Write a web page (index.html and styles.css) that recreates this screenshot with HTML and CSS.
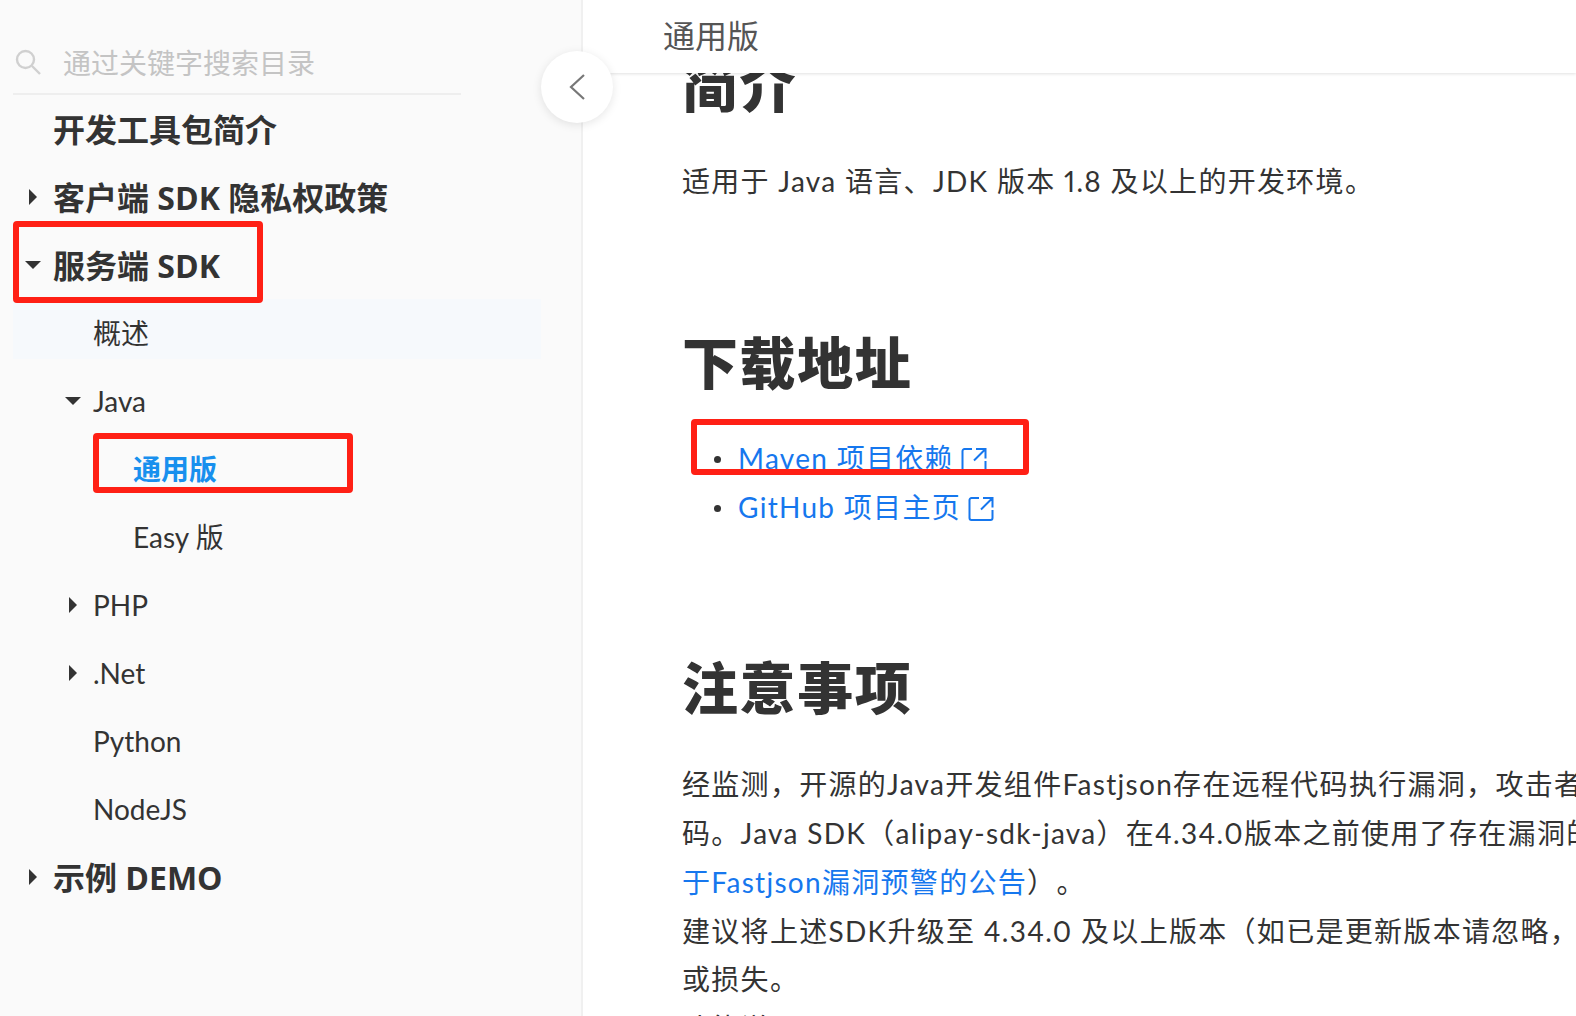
FILE: index.html
```html
<!DOCTYPE html>
<html lang="zh-CN">
<head>
  <meta charset="UTF-8" />
  <title>通用版</title>
  <link rel="stylesheet" href="styles.css">
</head>
<body>

  <aside class="sidebar">
    <div class="search">
      <svg class="search-icon" width="28" height="28" viewBox="0 0 28 28"><circle cx="11.5" cy="11.5" r="8.5" fill="none" stroke="#d0d0d0" stroke-width="2.4"/><path d="M18 18l8 8" stroke="#d0d0d0" stroke-width="2.4" fill="none"/></svg>
      <span class="search-text">通过关键字搜索目录</span>
    </div>
    <ul class="tree">
      <li class="item top">开发工具包简介</li>
      <li class="item top closed">客户端 SDK 隐私权政策</li>
      <li class="item top open">服务端 SDK</li>
      <li class="item sub shaded">概述</li>
      <li class="item sub open">Java</li>
      <li class="item leaf current">通用版</li>
      <li class="item leaf">Easy 版</li>
      <li class="item sub closed">PHP</li>
      <li class="item sub closed">.Net</li>
      <li class="item sub">Python</li>
      <li class="item sub">NodeJS</li>
      <li class="item top closed">示例 DEMO</li>
    </ul>
    <div class="mark mark-server"></div>
    <div class="mark mark-current"></div>
    <div class="collapse">
      <svg width="18" height="28" viewBox="0 0 18 28"><path d="M16 2L3 14l13 12" fill="none" stroke="#777" stroke-width="2.2"/></svg>
    </div>
  </aside>

  <main class="main">
    <header class="topbar">通用版</header>
    <article class="doc">
      <h2 class="first">简介</h2>
      <p>适用于 Java 语言、JDK 版本 1.8 及以上的开发环境。</p>
      <h2>下载地址</h2>
      <ul class="links">
        <li><a href="#">Maven 项目依赖<svg class="ext" width="26" height="26" viewBox="0 0 26 26"><path d="M11 2H3.5A2 2 0 0 0 1.500 4v18a2 2 0 0 0 2 2h19a2 2 0 0 0 2-2v-8M15 2h9.500v9.500M24.500 2L13 13.500" fill="none" stroke="#1677ee" stroke-width="2"/></svg></a></li>
        <li><a href="#">GitHub 项目主页<svg class="ext" width="26" height="26" viewBox="0 0 26 26"><path d="M11 2H3.5A2 2 0 0 0 1.500 4v18a2 2 0 0 0 2 2h19a2 2 0 0 0 2-2v-8M15 2h9.500v9.500M24.500 2L13 13.500" fill="none" stroke="#1677ee" stroke-width="2"/></svg></a></li>
      </ul>
      <h2>注意事项</h2>
      <p class="notice">经监测，开源的Java开发组件Fastjson存在远程代码执行漏洞，攻击者<br>码。Java SDK（alipay-sdk-java）在4.34.0版本之前使用了存在漏洞的<br><a href="#">于Fastjson漏洞预警的公告</a>）。<br>建议将上述SDK升级至 4.34.0 及以上版本（如已是更新版本请忽略，并<br>或损失。<br>功能说明</p>
    </article>
    <div class="mark mark-maven"></div>
  </main>

</body>
</html>
```

FILE: styles.css
```css
* {
  box-sizing: border-box;
}
html, body {
  height: 100%;
}
body {
  margin: 0;
  display: flex;
  overflow: hidden;
  height: 1016px;
  font-family: "Lato", "Noto Sans CJK SC", sans-serif;
  color: #333;
  background: #fff;
  text-spacing-trim: space-all;
}

/* left column */
.sidebar {
  position: relative;
  width: 583px;
  flex: none;
  background: #fafafa;
  border-right: 2px solid #f0f0f0;
  padding: 0 0 0 13px;
}
.search {
  width: 448px;
  height: 95px;
  padding-top: 45px;
  display: flex;
  align-items: flex-start;
  border-bottom: 2px solid #eee;
}
.search-icon {
  margin: 3px 0 0 1px;
}
.search-text {
  margin-left: 21px;
  font-size: 28px;
  line-height: 36px;
  color: #c4c4c4;
}
.tree {
  list-style: none;
  margin: 0;
  padding: 0;
  width: 528px;
}
.item {
  position: relative;
  height: 68px;
  line-height: 68px;
  font-size: 28px;
  white-space: nowrap;
}
.top {
  padding-left: 40px;
  padding-top: 1px;
  font-family: "Open Sans", "Noto Sans CJK SC", sans-serif;
  font-size: 32px;
  font-weight: 700;
}
.sub {
  padding-left: 80px;
}
.leaf {
  padding-left: 120px;
}
.shaded {
  background: linear-gradient(#f6f9fc, #f6f9fc) no-repeat;
  background-size: 100% 60px;
}
.current {
  color: #1890ee;
  font-weight: 700;
}
.closed::before, .open::before {
  content: "";
  position: absolute;
  top: 50%;
  border-style: solid;
  border-color: transparent;
}
.closed::before {
  margin-top: -8px;
  border-width: 8px 0 8px 8px;
  border-left-color: #333;
}
.open::before {
  margin-top: -4px;
  border-width: 8px 8px 0 8px;
  border-top-color: #333;
}
.top.closed::before {
  left: 16px;
}
.top.open::before {
  left: 12px;
}
.sub.closed::before {
  left: 56px;
}
.sub.open::before {
  left: 52px;
}
.collapse {
  position: absolute;
  left: 541px;
  top: 51px;
  width: 72px;
  height: 72px;
  border-radius: 50%;
  background: #fff;
  box-shadow: 0 2px 10px rgba(0,0,0,0.1);
  display: flex;
  align-items: center;
  justify-content: center;
  z-index: 3;
}

/* red annotations drawn on the screenshot */
.mark {
  position: absolute;
  border: 6px solid #ff2015;
  border-radius: 4px;
  pointer-events: none;
}
.mark-server {
  left: 13px;
  top: 221px;
  width: 250px;
  height: 82px;
}
.mark-current {
  left: 93px;
  top: 433px;
  width: 260px;
  height: 60px;
}
.mark-maven {
  left: 108px;
  top: 419px;
  width: 338px;
  height: 56px;
}

/* right column */
.main {
  position: relative;
  flex: 1;
  min-width: 0;
  overflow: hidden;
}
.topbar {
  position: relative;
  z-index: 2;
  height: 73px;
  padding-left: 80px;
  line-height: 72px;
  font-size: 32px;
  color: #555;
  background: #fff;
  box-shadow: 0 1px 3px rgba(0,0,0,0.12);
}
.doc {
  margin-top: -23px;
  padding-left: 99px;
  letter-spacing: 1.3px;
  font-variant-numeric: proportional-nums;
  white-space: nowrap;
}
.doc h2 {
  margin: 68px 0 35px;
  font-size: 56px;
  line-height: 72px;
  font-weight: 900;
  letter-spacing: 1.6px;
  color: #333;
}
.doc h2.first {
  margin-top: 0;
}
.doc p {
  margin: 0 0 121px;
  font-size: 28px;
  line-height: 48.75px;
}
.doc p.notice {
  margin-top: 36px;
}
.links {
  list-style: none;
  margin: 0 0 121px;
  padding: 0 0 0 56px;
  font-size: 28px;
  line-height: 48.75px;
}
.links li {
  position: relative;
}
.links li::before {
  content: "";
  position: absolute;
  left: -24px;
  top: 22px;
  width: 7px;
  height: 7px;
  border-radius: 50%;
  background: #333;
}
.doc a {
  color: #1677ee;
  text-decoration: none;
}
.ext {
  margin-left: 7px;
  vertical-align: -4px;
}
```
